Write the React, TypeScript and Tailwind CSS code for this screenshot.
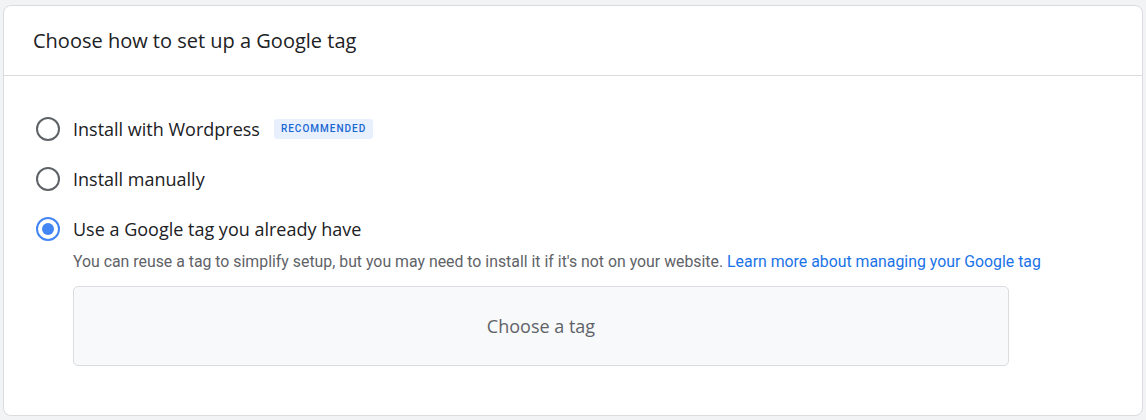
import React from "react";

type Option = {
  label: string;
  badge?: string;
  selected?: boolean;
};

const options: Option[] = [
  { label: "Install with Wordpress", badge: "Recommended" },
  { label: "Install manually" },
  { label: "Use a Google tag you already have", selected: true },
];

function Radio({ selected }: { selected?: boolean }) {
  return (
    <span
      className={
        selected
          ? "flex size-[24px] shrink-0 items-center justify-center rounded-full border-2 border-[#4285f4]"
          : "flex size-[24px] shrink-0 items-center justify-center rounded-full border-2 border-[#5f6368]"
      }
    >
      {selected && <span className="size-[12px] rounded-full bg-[#4285f4]" />}
    </span>
  );
}

export default function App() {
  return (
    <div className="h-[420px] w-[1146px] bg-[#f1f3f4] px-[3px] pt-[5px] pb-[4px]">
      <div className="flex h-full flex-col rounded-lg border border-[#dadce0] bg-white">
        <header className="flex h-[70px] shrink-0 items-center border-b border-[#dadce0] px-[29px]">
          <h1 className="font-['Open_Sans',sans-serif] text-[20px] leading-none text-[#202124]">
            Choose how to set up a Google tag
          </h1>
        </header>

        <div className="flex flex-col pl-[32px] pt-[41px]">
          {options.map((opt, i) => (
            <div key={opt.label} className={i > 0 ? "mt-[26px]" : ""}>
              <label className="flex h-[24px] items-center gap-[13px]">
                <Radio selected={opt.selected} />
                <span className="font-['Open_Sans',sans-serif] text-[18px] font-medium text-[#202124]">
                  {opt.label}
                </span>
                {opt.badge && (
                  <span className="ml-[1px] rounded-[3px] bg-[#e8f0fe] px-[7px] py-[5px] font-['Roboto',sans-serif] text-[10px] font-medium uppercase leading-none tracking-[0.1em] text-[#1967d2]">
                    {opt.badge}
                  </span>
                )}
              </label>
            </div>
          ))}

          <div className="pl-[37px]">
            <p className="mt-[11px] font-['Roboto',sans-serif] text-[15.85px] leading-[20px] text-[#5f6368]">
              You can reuse a tag to simplify setup, but you may need to install it if it's not on your website.{" "}
              <a className="text-[#1a73e8]">Learn more about managing your Google tag</a>
            </p>
            <button
              type="button"
              className="mt-[14px] flex h-[80px] w-[936px] items-center justify-center rounded-[5px] border border-[#dadce0] bg-[#f8f9fa] font-['Open_Sans',sans-serif] text-[18px] text-[#5f6368]"
            >
              Choose a tag
            </button>
          </div>
        </div>
      </div>
    </div>
  );
}
